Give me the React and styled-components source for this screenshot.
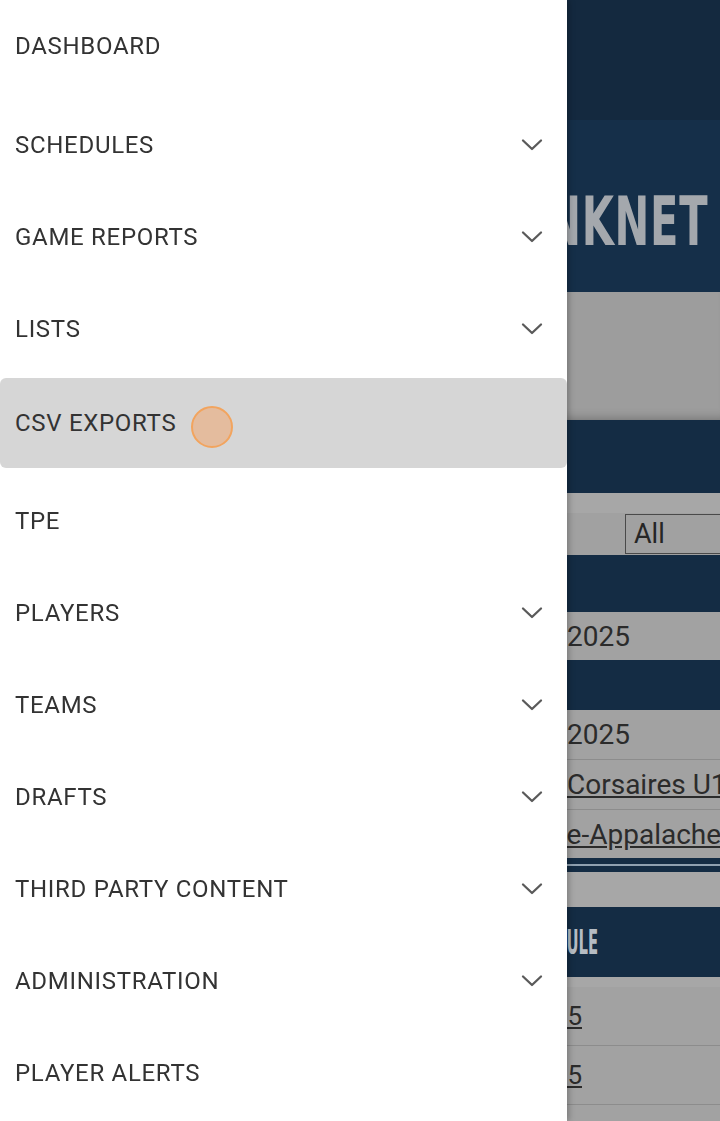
import React from "react";
import styled, { createGlobalStyle } from "styled-components";

const GlobalStyles = createGlobalStyle`
  html, body {
    margin: 0;
    padding: 0;
    overflow: hidden;
  }
  body {
    font-family: Roboto, "Liberation Sans", sans-serif;
  }
`;

const menu = [
  { group: "top", items: [{ label: "DASHBOARD" }] },
  {
    group: "reports",
    items: [
      { label: "SCHEDULES", expandable: true },
      { label: "GAME REPORTS", expandable: true },
      { label: "LISTS", expandable: true },
      { label: "CSV EXPORTS", active: true },
    ],
  },
  {
    group: "people",
    items: [
      { label: "TPE" },
      { label: "PLAYERS", expandable: true },
      { label: "TEAMS", expandable: true },
      { label: "DRAFTS", expandable: true },
      { label: "THIRD PARTY CONTENT", expandable: true },
      { label: "ADMINISTRATION", expandable: true },
      { label: "PLAYER ALERTS" },
    ],
  },
];

function Chevron() {
  return (
    <svg width="24" height="16" viewBox="0 0 24 16" fill="none">
      <path d="M3 3.5l9 8.5 9-8.5" stroke="#5a5a5a" strokeWidth="2.3" strokeLinecap="round" strokeLinejoin="round" />
    </svg>
  );
}

export default function App() {
  return (
    <>
      <GlobalStyles />
      <Page>
        <TopBar />
        <Banner>
          <BrandTitle>RINKNET</BrandTitle>
        </Banner>
        <FilterPanel />
        <NavyBand $h={73} />
        <LightStrip $h={20} />
        <FilterRow>
          <span />
          <Select>All</Select>
        </FilterRow>
        <NavyBand $h={57} />
        <InfoRow>
          <span />
          <Value>2025</Value>
        </InfoRow>
        <NavyBand $h={50} />
        <InfoRow $line>
          <span />
          <Value>2025</Value>
        </InfoRow>
        <InfoRow $line>
          <span />
          <LinkValue>Corsaires U18 AAA</LinkValue>
        </InfoRow>
        <InfoRow>
          <span />
          <LinkValue $pull={78}>Beauce-Appalaches</LinkValue>
        </InfoRow>
        <DoubleRule />
        <LightStrip $h={35} />
        <SectionHeading>
          <SectionTitle>SCHEDULE</SectionTitle>
        </SectionHeading>
        <LightStrip $h={10} />
        <ScheduleRow>
          <DateLink>2024-09-15</DateLink>
        </ScheduleRow>
        <ScheduleRow>
          <DateLink>2024-09-25</DateLink>
        </ScheduleRow>
        <ScheduleRow>
          <DateLink>2024-10-05</DateLink>
        </ScheduleRow>
      </Page>

      <Drawer>
        {menu.map((section) => (
          <Section key={section.group}>
            {section.items.map((item) => (
              <MenuItem key={item.label} $active={item.active}>
                <MenuLabel>{item.label}</MenuLabel>
                {item.expandable && <Chevron />}
                {item.active && <ClickMark />}
              </MenuItem>
            ))}
          </Section>
        ))}
      </Drawer>
    </>
  );
}

const Page = styled.div`
  display: flex;
  flex-direction: column;
  min-height: 100vh;
  background-color: #a3a3a3;
`;

const TopBar = styled.header`
  height: 120px;
  background-color: #14293f;
`;

const Banner = styled.section`
  box-sizing: border-box;
  height: 172px;
  display: flex;
  align-items: center;
  justify-content: flex-end;
  padding: 32px 12px 0 0;
  background-color: #152f49;
  overflow: hidden;
`;

const BrandTitle = styled.h1`
  margin: 0;
  font-family: "DejaVu Sans Condensed", "DejaVu Sans", sans-serif;
  font-weight: 700;
  font-size: 68px;
  line-height: 1;
  color: #a4a8ad;
  transform: scaleX(0.68);
  transform-origin: right center;
  letter-spacing: 1px;
`;

const FilterPanel = styled.div`
  height: 128px;
  background-color: #9d9d9d;
  box-shadow: inset 0 -10px 10px -8px rgba(0, 0, 0, 0.25);
`;

const NavyBand = styled.div`
  height: ${(p) => p.$h}px;
  background-color: #142c44;
`;

const LightStrip = styled.div`
  height: ${(p) => p.$h}px;
  background-color: #a7a7a7;
`;

const FilterRow = styled.div`
  display: grid;
  grid-template-columns: 625px 1fr;
  align-items: center;
  height: 42px;
  background-color: #a1a1a1;
`;

const Select = styled.div`
  height: 38px;
  display: flex;
  align-items: center;
  padding-left: 8px;
  border: 1px solid #4a4a4a;
  border-right: none;
  font-family: Roboto, sans-serif;
  font-size: 27px;
  color: #262626;
`;

const InfoRow = styled.div`
  display: grid;
  grid-template-columns: 567px 1fr;
  align-items: center;
  height: ${(p) => (p.$line ? 49 : 48)}px;
  background-color: #a2a2a2;
  border-bottom: ${(p) => (p.$line ? "1px solid #8c8c8c" : "none")};
  overflow: hidden;
  white-space: nowrap;
`;

const Value = styled.span`
  font-family: Roboto, sans-serif;
  font-size: 28px;
  color: #2b2b2b;
`;

const LinkValue = styled(Value)`
  text-decoration: underline;
  margin-left: ${(p) => (p.$pull ? -p.$pull : 0)}px;
`;

const DoubleRule = styled.div`
  height: 14px;
  background: linear-gradient(
    to bottom,
    #142c44 0,
    #142c44 6px,
    #8fa0b0 6px,
    #8fa0b0 8px,
    #142c44 8px
  );
`;

const SectionHeading = styled.div`
  height: 70px;
  display: flex;
  align-items: center;
  background-color: #142c44;
  overflow: hidden;
`;

const SectionTitle = styled.h2`
  margin: 0 0 0 510px;
  font-family: "DejaVu Sans Condensed", "DejaVu Sans", sans-serif;
  font-weight: 700;
  font-size: 33px;
  color: #b6bcc3;
  transform: scaleX(0.5);
  transform-origin: left center;
  white-space: nowrap;
`;

const ScheduleRow = styled.div`
  display: grid;
  grid-template-columns: 582px 1fr;
  align-items: center;
  height: 58px;
  background-color: #a2a2a2;
  border-bottom: 1px solid #8c8c8c;
`;

const DateLink = styled.span`
  justify-self: end;
  font-family: Roboto, sans-serif;
  font-size: 26px;
  color: #2b2b2b;
  text-decoration: underline;
`;

const Drawer = styled.nav`
  position: fixed;
  top: 0;
  left: 0;
  bottom: 0;
  width: 567px;
  display: flex;
  flex-direction: column;
  gap: 7px;
  background-color: #ffffff;
  box-shadow: 2px 0 6px rgba(0, 0, 0, 0.25);
`;

const Section = styled.ul`
  margin: 0;
  padding: 0;
  list-style: none;
  display: flex;
  flex-direction: column;
`;

const MenuItem = styled.li`
  position: relative;
  display: flex;
  align-items: center;
  justify-content: space-between;
  height: ${(p) => (p.$active ? 90 : 92)}px;
  margin-top: ${(p) => (p.$active ? 3 : 0)}px;
  padding: 0 23px 0 15px;
  border-radius: 6px;
  background-color: ${(p) => (p.$active ? "#d6d6d6" : "transparent")};
`;

const MenuLabel = styled.span`
  font-family: Roboto, sans-serif;
  font-size: 24px;
  letter-spacing: 0.7px;
  color: #333333;
`;

const ClickMark = styled.span`
  position: absolute;
  left: 191px;
  top: 28px;
  width: 42px;
  height: 42px;
  border-radius: 50%;
  background-color: rgba(236, 170, 120, 0.6);
  border: 2px solid #f2a45e;
  box-sizing: border-box;
`;
